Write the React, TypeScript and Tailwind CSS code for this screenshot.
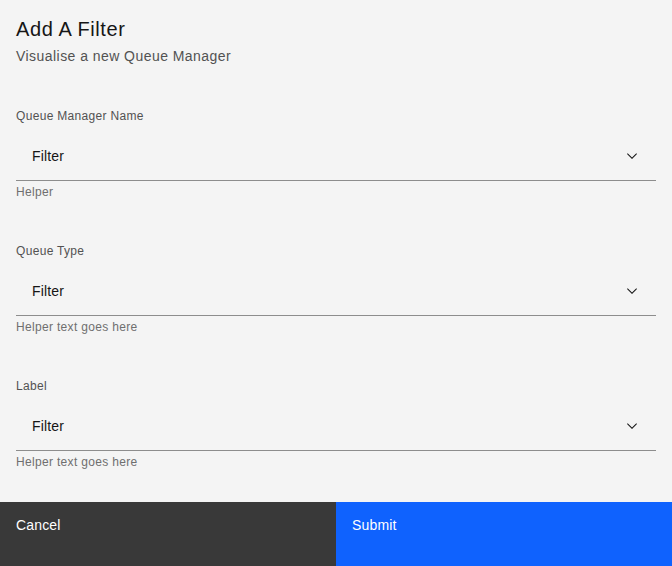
import React from 'react';

const fields = [
  { label: 'Queue Manager Name', helper: 'Helper' },
  { label: 'Queue Type', helper: 'Helper text goes here' },
  { label: 'Label', helper: 'Helper text goes here' },
];

function Chevron() {
  return (
    <svg width="16" height="16" viewBox="0 0 16 16" fill="#161616" aria-hidden="true">
      <path d="M8 11L3 6 3.7 5.3 8 9.6 12.3 5.3 13 6z" />
    </svg>
  );
}

export default function App() {
  return (
    <div
      className="w-[672px] h-[566px] bg-[#f4f4f4] flex flex-col"
      style={{ fontFamily: '"Liberation Sans", Arial, sans-serif' }}
    >
      {/* Header */}
      <div className="px-4 pt-[15px]">
        <h2 className="text-[20px] leading-[28px] tracking-[0.6px] text-[#161616]">Add A Filter</h2>
        <p className="mt-[3px] text-[14px] leading-[20px] tracking-[0.45px] text-[#525252]">
          Visualise a new Queue Manager
        </p>
      </div>

      {/* Body */}
      <div className="px-4 pt-[42px] flex flex-col gap-[43px]">
        {fields.map((f) => (
          <div key={f.label} className="flex flex-col">
            <label className="text-[12px] leading-[16px] tracking-[0.32px] text-[#525252]">{f.label}</label>
            <button className="mt-2 h-[49px] w-full flex items-center justify-between pl-4 pr-4 border-b border-[#8d8d8d] text-left">
              <span className="text-[14px] leading-[18px] tracking-[0.16px] text-[#161616]">Filter</span>
              <Chevron />
            </button>
            <div className="mt-[3px] text-[12px] leading-[16px] tracking-[0.32px] text-[#6f6f6f]">{f.helper}</div>
          </div>
        ))}
      </div>

      {/* Footer */}
      <div className="mt-auto grid grid-cols-2 h-16">
        <button className="bg-[#393939] text-white text-left px-4 pt-[14px] pb-8 text-[14px] leading-[18px] tracking-[0.16px] flex items-start">
          Cancel
        </button>
        <button className="bg-[#0f62fe] text-white text-left px-4 pt-[14px] pb-8 text-[14px] leading-[18px] tracking-[0.16px] flex items-start">
          Submit
        </button>
      </div>
    </div>
  );
}
